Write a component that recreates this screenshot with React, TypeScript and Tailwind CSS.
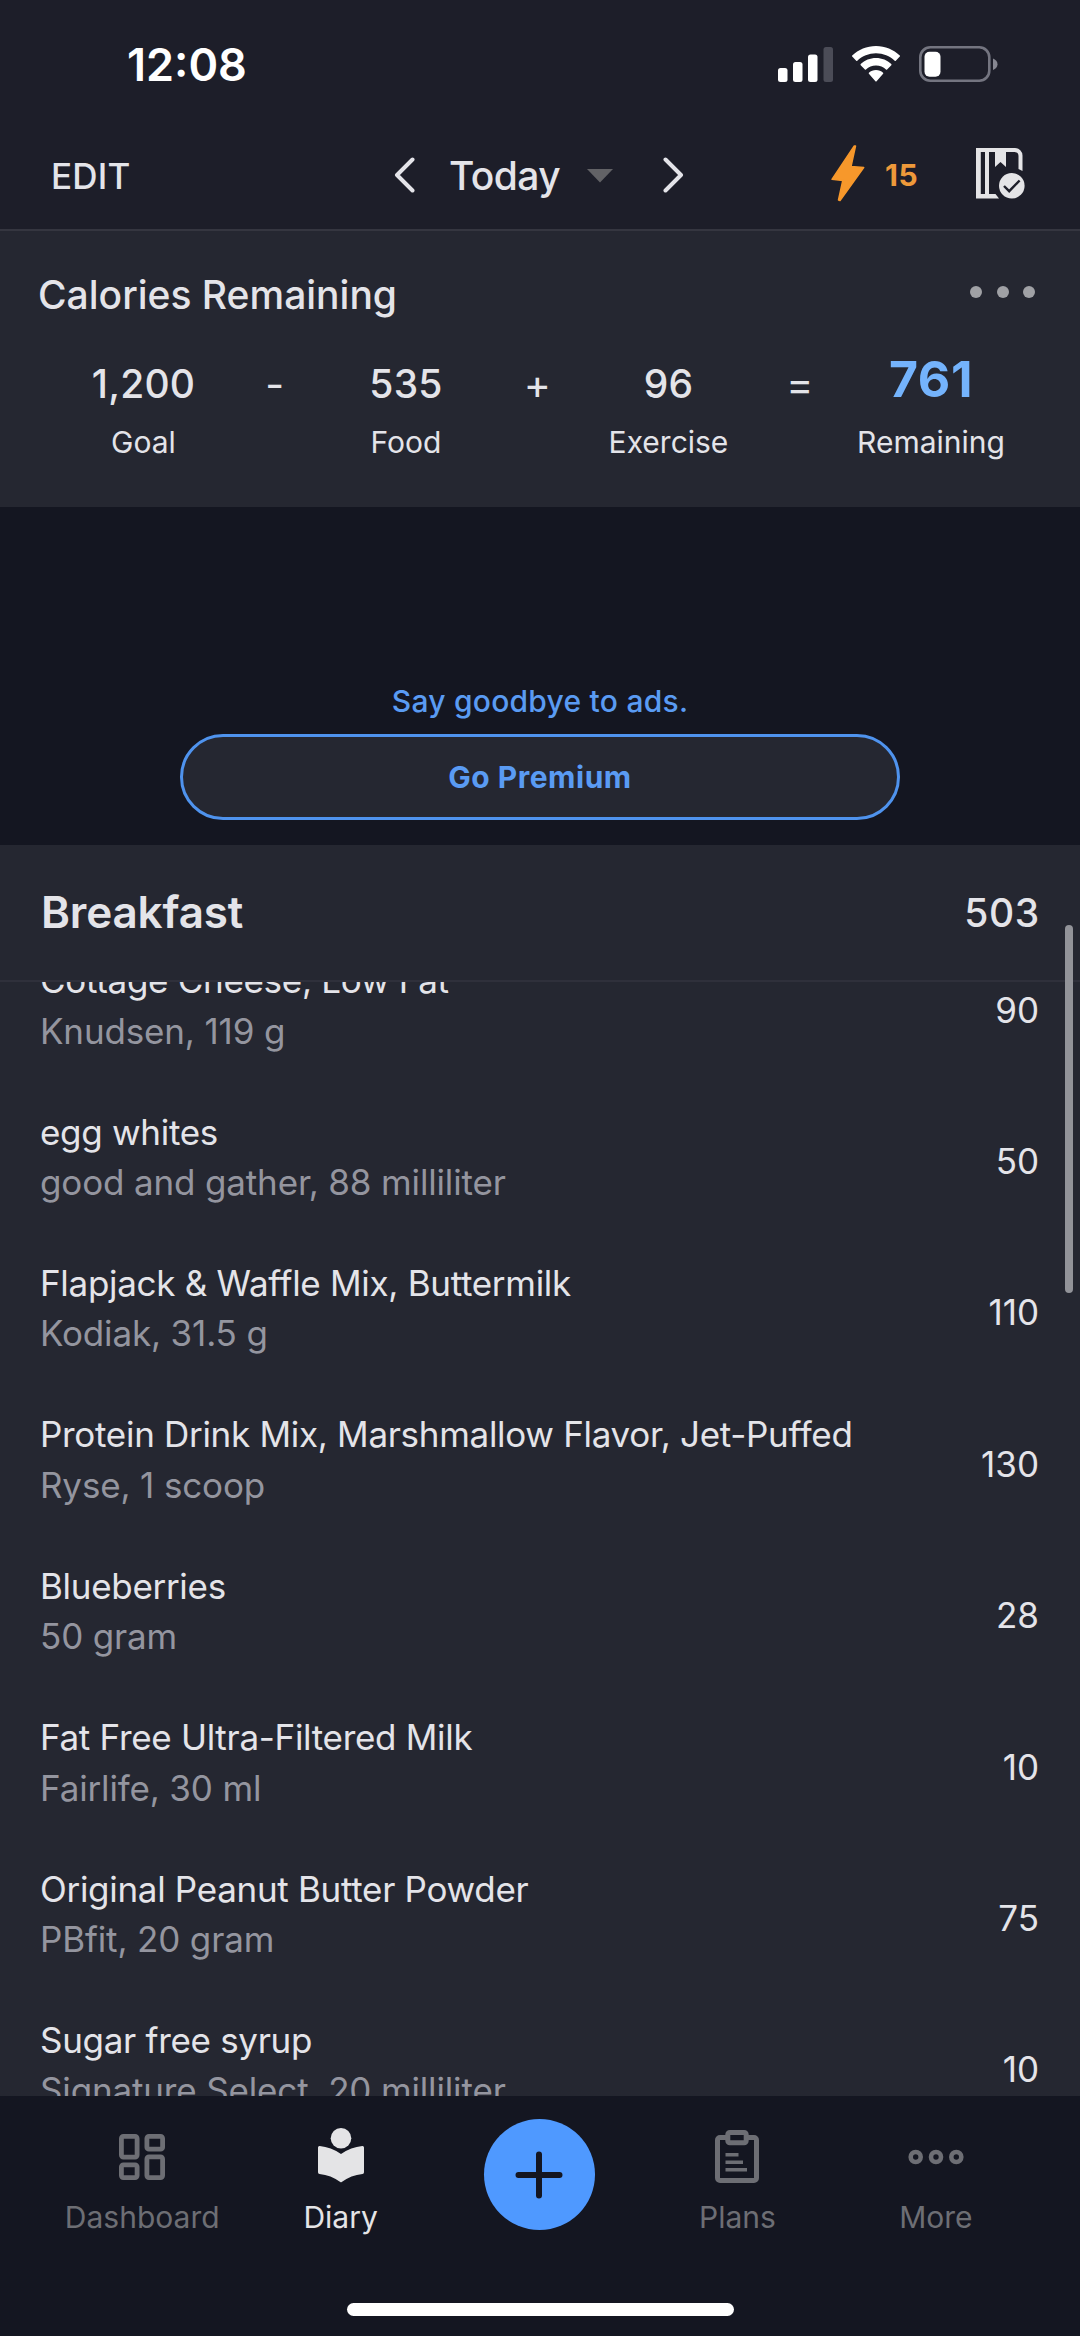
import React from 'react';

interface FoodItem {
  name: string;
  detail: string;
  calories: number;
}

const breakfast: FoodItem[] = [
  { name: 'Cottage Cheese, Low Fat', detail: 'Knudsen, 119 g', calories: 90 },
  { name: 'egg whites', detail: 'good and gather, 88 milliliter', calories: 50 },
  { name: 'Flapjack & Waffle Mix, Buttermilk', detail: 'Kodiak, 31.5 g', calories: 110 },
  { name: 'Protein Drink Mix, Marshmallow Flavor, Jet-Puffed', detail: 'Ryse, 1 scoop', calories: 130 },
  { name: 'Blueberries', detail: '50 gram', calories: 28 },
  { name: 'Fat Free Ultra-Filtered Milk', detail: 'Fairlife, 30 ml', calories: 10 },
  { name: 'Original Peanut Butter Powder', detail: 'PBfit, 20 gram', calories: 75 },
  { name: 'Sugar free syrup', detail: 'Signature Select, 20 milliliter', calories: 10 },
];

function StatusBar() {
  return (
    <div className="flex h-[129px] items-center justify-between pl-[127px] pr-[82px]">
      <span className="text-[45px] font-semibold leading-none text-white">12:08</span>
      <div className="flex items-center pb-[2px]">
        <svg width="55" height="36" viewBox="0 0 55 36" fill="#fff">
          <rect x="0" y="22" width="9.5" height="14" rx="2.5" />
          <rect x="15" y="16" width="9.5" height="20" rx="2.5" />
          <rect x="30" y="8.5" width="9.5" height="27.5" rx="2.5" />
          <rect x="45.5" y="1" width="9.5" height="35" rx="2.5" fill="#4b4c57" />
        </svg>
        <svg className="ml-[19px]" width="48" height="36" viewBox="0 0 48 36" fill="#fff">
          <path d="M24 0C33.2 0 41.6 3.6 47.8 9.5c.3.3.3.8 0 1.1l-4 4.1c-.3.3-.8.3-1.1 0C37.8 10 31.2 7.2 24 7.2S10.2 10 5.3 14.7c-.3.3-.8.3-1.1 0l-4-4.1c-.3-.3-.3-.8 0-1.1C6.4 3.600 14.8 0 24 0z" />
          <path d="M24 12c5.9 0 11.3 2.3 15.3 6.1.3.3.3.8 0 1.1l-4.2 4.3c-.3.3-.8.3-1.1 0C31.4 21 27.9 19.5 24 19.5S16.6 21 14 23.5c-.3.3-.8.3-1.1 0l-4.2-4.3c-.3-.3-.3-.8 0-1.1C12.7 14.3 18.1 12 24 12z" />
          <path d="M24 24c2.7 0 5.2 1 7.1 2.7.3.3.3.8 0 1.1l-6.5 7.4c-.3.4-.9.4-1.2 0l-6.5-7.4c-.3-.3-.3-.8 0-1.1C18.8 25 21.3 24 24 24z" />
        </svg>
        <svg className="ml-[19px]" width="79" height="36" viewBox="0 0 79 36">
          <rect x="1.3" y="1.3" width="69" height="33.4" rx="10" fill="none" stroke="#747580" strokeWidth="2.6" />
          <rect x="5.5" y="5.700" width="16" height="25" rx="5" fill="#fff" />
          <path d="M74 12.500c2.700 1 4.500 3 4.500 5.700s-1.800 4.700-4.500 5.700z" fill="#868791" />
        </svg>
      </div>
    </div>
  );
}

function NavBar() {
  return (
    <div className="grid h-[102px] grid-cols-[1fr_auto_1fr] items-center border-b-2 border-[#353640] pb-[8px] pl-[51px] pr-[55px]">
      <span className="pt-[3px] text-[35px] font-medium leading-none tracking-[0.2px]">EDIT</span>
      <div className="flex items-center pl-[2px]">
        <svg width="21" height="36" viewBox="0 0 21 36" fill="none" stroke="#e4e4e9" strokeWidth="4" strokeLinecap="round" strokeLinejoin="round">
          <path d="M18.5 2.5L3 18l15.5 15.5" />
        </svg>
        <span className="ml-[34px] w-[138px] whitespace-nowrap text-[39px] font-medium leading-none tracking-[-0.6px]">Today</span>
        <svg width="26" height="14" viewBox="0 0 26 14" className="mt-px">
          <path d="M0 0h26L13 13.5z" fill="#626266" />
        </svg>
        <svg className="ml-[50px]" width="21" height="36" viewBox="0 0 21 36" fill="none" stroke="#e4e4e9" strokeWidth="4" strokeLinecap="round" strokeLinejoin="round">
          <path d="M2.5 2.5L18 18 2.5 33.5" />
        </svg>
      </div>
      <div className="flex items-center justify-end">
        <svg className="mb-[3px]" width="34" height="57" viewBox="0 0 34 57" fill="#f7982b" stroke="#f7982b" strokeWidth="1.5" strokeLinejoin="round">
          <path d="M24.5 1L20 21.5 32.7 22.5 9 55.5 7.5 55 11.8 35.5 1 34.3 23.3 1z" />
        </svg>
        <span className="ml-[20px] w-[35px] whitespace-nowrap text-[30px] font-bold leading-none tracking-[0.5px] text-[#ee993a]">15</span>
        <svg className="mb-[3px] ml-[56px]" width="49" height="51" viewBox="0 0 49 51">
          <path d="M0 0h39a7.5 7.5 0 0 1 7.5 7.5V23l-4-2V8a4 4 0 0 0-4-4H13v42h6.5l3.5 4.5H0zM4.800 4v42H9V4z" fill="#e4e4e6" fillRule="evenodd" />
          <path d="M19 3h11v16l-5.5-5L19 19z" fill="#e4e4e6" />
          <circle cx="35.8" cy="37.8" r="12.8" fill="#e4e4e6" />
          <path d="M28 38l5.2 5.2L43.6 32.5" fill="none" stroke="#1d1e29" strokeWidth="2.4" />
        </svg>
      </div>
    </div>
  );
}

function Stat({ value, label }: { value: string; label: string }) {
  return (
    <div className="flex w-[200px] flex-col items-center">
      <span className="text-[39px] font-medium leading-[60px] tracking-[0.2px]">{value}</span>
      <span className="text-[30px] leading-[56px]">{label}</span>
    </div>
  );
}

function Operator({ children }: { children: React.ReactNode }) {
  return <span className="-mx-[34.5px] w-[131.5px] text-center text-[41px] leading-[60px]">{children}</span>;
}

function CalorieSummary() {
  return (
    <div className="h-[276px] bg-[#252731] pt-[33px]">
      <div className="flex h-[60px] items-center justify-between pl-[38px] pr-[45px]">
        <h2 className="text-[39px] font-medium leading-none">Calories Remaining</h2>
        <div className="mb-[5px] flex gap-[14.5px]">
          <span className="h-[12px] w-[12px] rounded-full bg-[#a0a1a5]" />
          <span className="h-[12px] w-[12px] rounded-full bg-[#a0a1a5]" />
          <span className="h-[12px] w-[12px] rounded-full bg-[#a0a1a5]" />
        </div>
      </div>
      <div className="mt-[30px] flex pl-[43.5px]">
        <Stat value="1,200" label="Goal" />
        <Operator>-</Operator>
        <Stat value="535" label="Food" />
        <Operator>+</Operator>
        <Stat value="96" label="Exercise" />
        <Operator>=</Operator>
        <div className="flex w-[200px] flex-col items-center">
          <span className="text-[50px] font-bold leading-[50px] tracking-[0.6px] text-[#74b3fc]">761</span>
          <span className="mt-[10px] text-[30px] leading-[56px]">Remaining</span>
        </div>
      </div>
    </div>
  );
}

function AdBanner() {
  return (
    <div className="flex h-[338px] flex-col items-center bg-[#141621] pt-[168px] text-[#5a9bf3]">
      <p className="text-[30px] font-medium leading-[52px] tracking-[0.25px]">Say goodbye to ads.</p>
      <button className="mt-[7px] h-[86px] w-[720px] rounded-full border-3 border-[#4f93ee] bg-[#252731] text-[30px] font-bold leading-none tracking-[0.5px]">
        Go Premium
      </button>
    </div>
  );
}

function FoodRow({ item }: { item: FoodItem }) {
  return (
    <div className="flex h-[151.4px] items-center justify-between pl-[40px] pr-[41px]">
      <div className="whitespace-nowrap text-[35px] leading-[50.5px]">
        <p className="tracking-[-0.3px]">{item.name}</p>
        <p className="tracking-[-0.15px] text-[#94959f]">{item.detail}</p>
      </div>
      <span className="pt-[9px] text-[35px] leading-none">{item.calories}</span>
    </div>
  );
}

function TabItem({ label, active, children }: { label: string; active?: boolean; children: React.ReactNode }) {
  return (
    <div className={`flex flex-1 flex-col items-center ${active ? 'text-[#e4e4e6]' : 'text-[#6d6e74]'}`}>
      <div className="flex h-[82px] items-center pt-[40px]">{children}</div>
      <span className="mt-[17px] text-[30px] leading-[44px]">{label}</span>
    </div>
  );
}

function TabBar() {
  return (
    <div className="flex h-[207px] bg-[#141621] pl-[43px] pr-[45px]">
      <TabItem label="Dashboard">
        <svg width="46" height="46" viewBox="0 0 46 46" fill="none" stroke="currentColor" strokeWidth="4.8">
          <rect x="2.4" y="2.4" width="15.7" height="20.7" rx="2" />
          <rect x="27.9" y="2.4" width="15.7" height="12.8" rx="2" />
          <rect x="27.9" y="22.9" width="15.7" height="20.7" rx="2" />
          <rect x="2.4" y="30.8" width="15.7" height="12.8" rx="2" />
        </svg>
      </TabItem>
      <TabItem label="Diary" active>
        <svg className="mb-[4px]" width="46" height="55" viewBox="0 0 46 55" fill="currentColor">
          <circle cx="23" cy="10.3" r="10.3" />
          <path d="M0 19.5q0-1.700 1.700-1.500Q13 19 23 26 33 19 44.300 18q1.700-.2 1.700 1.500v24.700q0 1.500-1.500 1.700Q33 47 23.700 54q-.7.5-1.400 0Q13 47 1.500 45.900 0 45.700 0 44.200z" />
        </svg>
      </TabItem>
      <div className="flex flex-1 justify-center pt-[23px]">
        <button className="flex h-[111px] w-[111px] items-center justify-center rounded-full bg-[#4f99ff]">
          <svg width="48" height="48" viewBox="0 0 48 48" stroke="#141621" strokeWidth="6" strokeLinecap="round">
            <path d="M24 3.5v41M3.5 24h41" />
          </svg>
        </button>
      </div>
      <TabItem label="Plans">
        <svg className="mb-[2px]" width="44" height="53" viewBox="0 0 44 53" fill="none" stroke="currentColor">
          <path d="M11 7.5H5a2.5 2.5 0 0 0-2.5 2.5v38A2.5 2.5 0 0 0 5 50.5h34a2.5 2.5 0 0 0 2.5-2.5V10A2.5 2.5 0 0 0 39 7.5h-6" strokeWidth="5" />
          <rect x="12.8" y="2.5" width="18.4" height="10.2" rx="2" strokeWidth="5" />
          <path d="M10.5 24.8h13M10.5 32.2h17.5M10.5 39.8h21.5" strokeWidth="3.6" />
        </svg>
      </TabItem>
      <TabItem label="More">
        <svg width="56" height="16" viewBox="0 0 56 16" fill="none" stroke="currentColor" strokeWidth="4.6">
          <circle cx="7.7" cy="8" r="5" />
          <circle cx="28" cy="8" r="5" />
          <circle cx="48.3" cy="8" r="5" />
        </svg>
      </TabItem>
    </div>
  );
}

export default function App() {
  return (
    <div className="relative flex h-[2336px] w-[1080px] flex-col overflow-hidden bg-[#141621] font-['Inter',sans-serif] text-[#e4e4e9]">
      <div className="bg-[#1d1e29]">
        <StatusBar />
        <NavBar />
      </div>
      <CalorieSummary />
      <AdBanner />

      {/* Meal header */}
      <div className="flex h-[137px] items-center justify-between border-b-2 border-[#2f303b] bg-[#252731] pl-[41px] pr-[40px]">
        <h2 className="pb-[2px] text-[44px] font-semibold leading-none tracking-[-0.15px]">Breakfast</h2>
        <span className="text-[39px] font-medium leading-none tracking-[0.7px]">503</span>
      </div>

      {/* Meal entries */}
      <div className="h-[1114px] overflow-hidden bg-[#252731]">
        <div className="-mt-[52px]">
          {breakfast.map((item) => (
            <FoodRow key={item.name} item={item} />
          ))}
        </div>
      </div>

      <TabBar />
      <div className="mx-auto h-[13px] w-[387px] rounded-full bg-white" />

      {/* Scroll indicator */}
      <div className="absolute right-[7px] top-[925px] h-[368px] w-[8px] rounded-full bg-[#929399]" />
    </div>
  );
}
